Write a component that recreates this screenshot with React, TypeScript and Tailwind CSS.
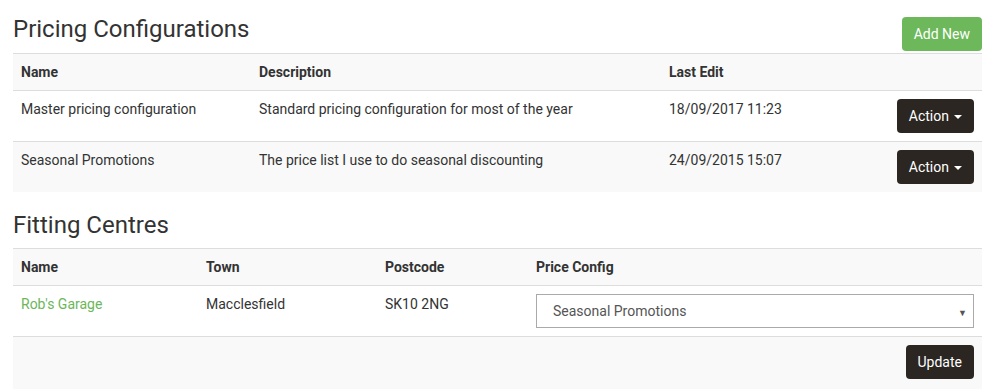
import React from 'react';

const configs = [
  { name: 'Master pricing configuration', description: 'Standard pricing configuration for most of the year', lastEdit: '18/09/2017 11:23' },
  { name: 'Seasonal Promotions', description: 'The price list I use to do seasonal discounting', lastEdit: '24/09/2015 15:07' },
];

function Caret() {
  return <span className="ml-[5px] inline-block h-0 w-0 border-x-[4px] border-t-[4px] border-x-transparent border-t-white align-middle" />;
}

function DarkButton({ children }: { children: React.ReactNode }) {
  return (
    <button className="h-[34px] rounded-[4px] bg-[#2b2621] px-3 text-[14px] font-normal leading-[20px] text-white">
      {children}
    </button>
  );
}

export default function App() {
  return (
    <div className="h-screen overflow-hidden bg-white pl-[13px] pr-[7px] text-[14px] leading-[20px] text-[#333] [font-family:Roboto,'Liberation_Sans',sans-serif]">
      <div className="flex items-start justify-between pt-4">
        <h3 className="text-[24px] font-normal leading-[26px] text-[#333]">Pricing Configurations</h3>
        <button className="mt-px h-[34px] rounded-[4px] bg-[#6cb85b] px-3 text-[14px] font-normal text-white">
          Add New
        </button>
      </div>

      <table className="mt-[2px] w-full border-collapse text-left">
        <thead>
          <tr className="border-t border-[#ddd] bg-[#f9f9f9]">
            <th className="w-[238px] p-2 font-bold">Name</th>
            <th className="w-[410px] p-2 font-bold">Description</th>
            <th className="p-2 font-bold">Last Edit</th>
            <th className="p-2" />
          </tr>
        </thead>
        <tbody>
          {configs.map((c, i) => (
            <tr key={c.name} className={`border-t border-[#ddd] ${i % 2 === 1 ? 'bg-[#f9f9f9]' : 'bg-white'}`}>
              <td className="p-2 align-top">{c.name}</td>
              <td className="p-2 align-top">{c.description}</td>
              <td className="p-2 align-top">{c.lastEdit}</td>
              <td className="p-2 text-right align-top">
                <DarkButton>
                  Action
                  <Caret />
                </DarkButton>
              </td>
            </tr>
          ))}
        </tbody>
      </table>

      <h3 className="mt-5 text-[24px] font-normal leading-[26px] text-[#333]">Fitting Centres</h3>

      <table className="mt-[10px] w-full border-collapse text-left">
        <thead>
          <tr className="border-t border-[#ddd] bg-[#f9f9f9]">
            <th className="w-[185px] p-2 font-bold">Name</th>
            <th className="w-[179px] p-2 font-bold">Town</th>
            <th className="w-[151px] p-2 font-bold">Postcode</th>
            <th className="p-2 font-bold">Price Config</th>
          </tr>
        </thead>
        <tbody>
          <tr className="border-t border-[#ddd] bg-white">
            <td className="p-2 align-top">
              <a href="#" className="text-[#6cb65a]">Rob's Garage</a>
            </td>
            <td className="p-2 align-top">Macclesfield</td>
            <td className="p-2 align-top">SK10 2NG</td>
            <td className="p-2 align-top">
              <div className="relative">
                <select
                  defaultValue="Seasonal Promotions"
                  className="block h-[34px] w-full appearance-none border border-[#aaa] bg-white pl-4 pr-8 text-[14px] text-[#555]"
                >
                  <option>Master pricing configuration</option>
                  <option>Seasonal Promotions</option>
                </select>
                <span className="pointer-events-none absolute right-[7px] top-[9px] text-[9px] text-[#555]">▼</span>
              </div>
            </td>
          </tr>
          <tr className="border-t border-[#ddd] bg-[#f9f9f9]">
            <td colSpan={4} className="h-[60px] p-2 text-right align-top">
              <DarkButton>Update</DarkButton>
            </td>
          </tr>
        </tbody>
      </table>
    </div>
  );
}
